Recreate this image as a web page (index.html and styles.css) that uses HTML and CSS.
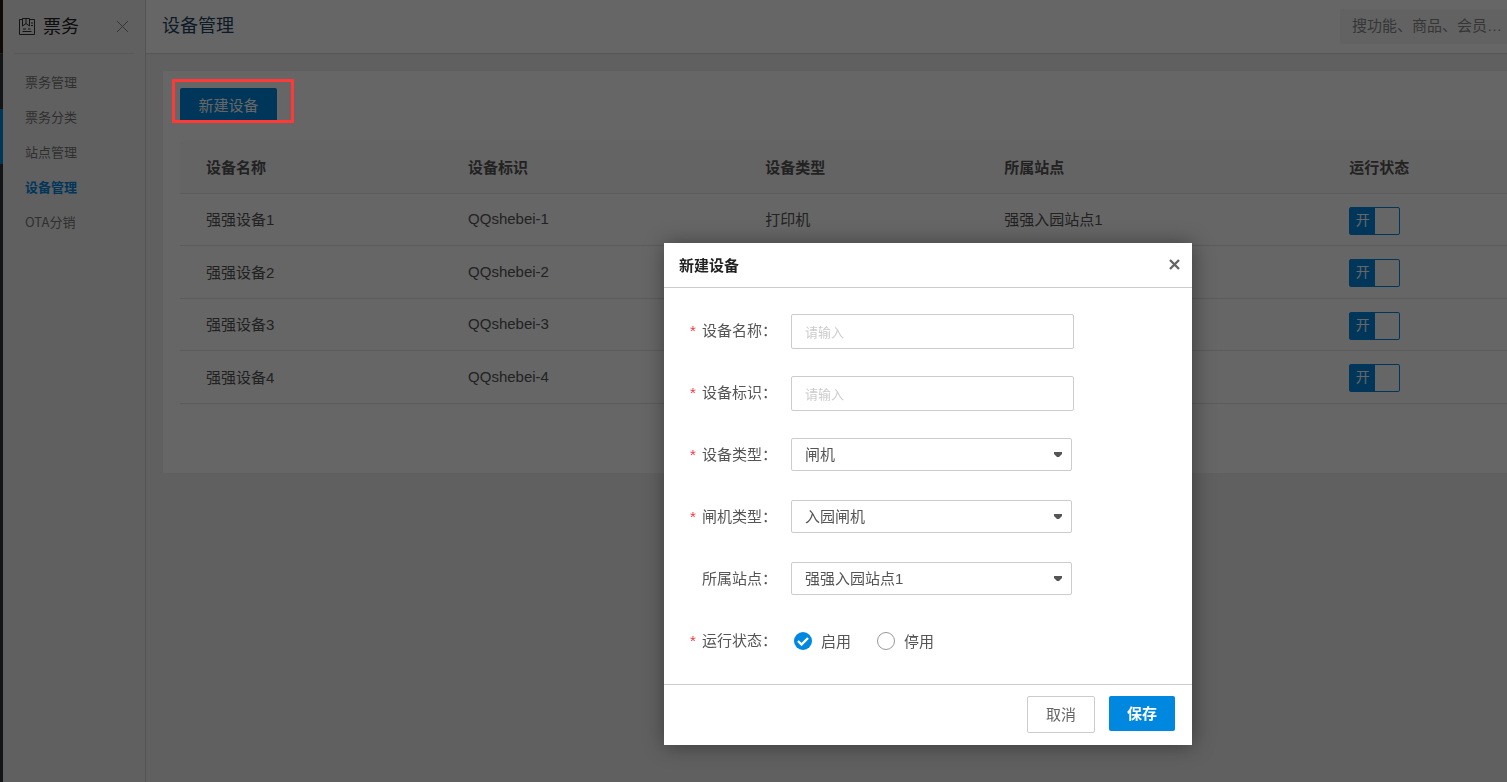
FILE: index.html
```html
<!DOCTYPE html>
<html lang="zh-CN">
  <head>
    <meta charset="UTF-8" />
    <meta name="viewport" content="width=device-width, initial-scale=1.0" />
    <title>设备管理</title>
    <link rel="stylesheet" href="styles.css">
  </head>
  <body>
    <div class="app">
      <!-- Collapsed main menu -->
      <div class="rail">
        <div class="rail-logo"></div>
        <div class="rail-item"></div>
        <div class="rail-item active"></div>
      </div>

      <!-- Sidebar -->
      <aside class="sidebar">
        <div class="sidebar-head">
          <svg class="sidebar-icon" width="16" height="17" viewBox="0 0 16 17" fill="none" stroke="currentColor">
            <path d="M3.5 1.5H0.5V16.5H15.5V1.5H11" />
            <path d="M3.5 0.5H10.5V8L7 5.5L3.5 8Z" />
            <path d="M7 1V5.5M12 5H14M12 7.5H14M4 11H7M9 11H11.5M3.5 13.5H12.5" />
          </svg>
          <span class="sidebar-title">票务</span>
          <button type="button" class="sidebar-close" aria-label="收起">
            <svg width="13" height="13" viewBox="0 0 13 13" stroke="currentColor">
              <path d="M1 1L12 12M12 1L1 12" />
            </svg>
          </button>
        </div>
        <nav class="menu">
          <a href="#">票务管理</a>
          <a href="#">票务分类</a>
          <a href="#">站点管理</a>
          <a href="#" class="active">设备管理</a>
          <a href="#">OTA分销</a>
        </nav>
      </aside>

      <div class="main">
        <header class="topbar">
          <h1>设备管理</h1>
          <input type="text" class="search" aria-label="搜索" placeholder="搜功能、商品、会员…" />
        </header>

        <!-- Device list -->
        <section class="card">
          <div class="toolbar">
            <button type="button" class="btn-new">新建设备</button>
            <span class="highlight"></span>
          </div>
          <table class="devices">
            <colgroup>
              <col class="col-name" />
              <col class="col-code" />
              <col class="col-type" />
              <col class="col-site" />
              <col />
            </colgroup>
            <thead>
              <tr>
                <th>设备名称</th>
                <th>设备标识</th>
                <th>设备类型</th>
                <th>所属站点</th>
                <th>运行状态</th>
              </tr>
            </thead>
            <tbody>
              <tr>
                <td>强强设备1</td>
                <td>QQshebei-1</td>
                <td>打印机</td>
                <td>强强入园站点1</td>
                <td class="status"><button type="button" class="switch" role="switch" aria-checked="true"><span>开</span></button></td>
              </tr>
              <tr>
                <td>强强设备2</td>
                <td>QQshebei-2</td>
                <td></td>
                <td></td>
                <td class="status"><button type="button" class="switch" role="switch" aria-checked="true"><span>开</span></button></td>
              </tr>
              <tr>
                <td>强强设备3</td>
                <td>QQshebei-3</td>
                <td></td>
                <td></td>
                <td class="status"><button type="button" class="switch" role="switch" aria-checked="true"><span>开</span></button></td>
              </tr>
              <tr>
                <td>强强设备4</td>
                <td>QQshebei-4</td>
                <td></td>
                <td></td>
                <td class="status"><button type="button" class="switch" role="switch" aria-checked="true"><span>开</span></button></td>
              </tr>
            </tbody>
          </table>
        </section>
      </div>
    </div>

    <div class="mask"></div>

    <!-- New device dialog -->
    <form class="modal" role="dialog" aria-labelledby="modal-title">
      <div class="modal-head">
        <h2 id="modal-title">新建设备</h2>
        <button type="button" class="modal-close" aria-label="关闭">
          <svg width="11" height="11" viewBox="0 0 11 11" stroke="currentColor" stroke-width="2.4">
            <path d="M1 1L10 10M10 1L1 10" />
          </svg>
        </button>
      </div>
      <div class="modal-body">
        <div class="row">
          <label class="required" for="name">设备名称：</label>
          <input type="text" class="field" id="name" placeholder="请输入" />
        </div>
        <div class="row">
          <label class="required" for="code">设备标识：</label>
          <input type="text" class="field" id="code" placeholder="请输入" />
        </div>
        <div class="row">
          <label class="required" for="type">设备类型：</label>
          <select class="field" id="type">
            <option>闸机</option>
            <option>打印机</option>
          </select>
        </div>
        <div class="row">
          <label class="required" for="gate">闸机类型：</label>
          <select class="field" id="gate">
            <option>入园闸机</option>
          </select>
        </div>
        <div class="row">
          <label for="site">所属站点：</label>
          <select class="field" id="site">
            <option>强强入园站点1</option>
          </select>
        </div>
        <div class="row" role="radiogroup" aria-labelledby="status-label">
          <span class="label required" id="status-label">运行状态：</span>
          <div class="radios">
            <label><input type="radio" name="status" checked />启用</label>
            <label><input type="radio" name="status" />停用</label>
          </div>
        </div>
      </div>
      <div class="modal-foot">
        <button type="button" class="btn-cancel">取消</button>
        <button type="submit" class="btn-save">保存</button>
      </div>
    </form>
  </body>
</html>
```
FILE: styles.css
```css
* {
  box-sizing: border-box;
}
body {
  margin: 0;
  overflow: hidden;
  font-family: "Liberation Sans", "Noto Sans CJK SC", sans-serif;
  font-size: 15px;
  color: #555;
  background-color: #f0f0f0;
}
button,
input,
select {
  font: inherit;
  margin: 0;
}
button {
  padding: 0 0 2px;
  cursor: pointer;
}
.app {
  display: flex;
  min-height: 100vh;
}

/* main menu */
.rail {
  flex: none;
  width: 3px;
  background-color: #2d3238;
}
.rail-logo {
  height: 54px;
  background-color: #221a14;
  border-bottom: 1px solid #484c52;
}
.rail-item {
  height: 55px;
}
.rail-item.active {
  background-color: #0088e0;
}

/* sidebar */
.sidebar {
  flex: none;
  width: 143px;
  background-color: #f1f1f1;
  border-right: 1px solid #d2d2d2;
}
.sidebar-head {
  display: flex;
  align-items: center;
  height: 54px;
  margin: 0 11px;
  padding: 0 5px;
  border-bottom: 1px solid #dcdcdc;
  color: #333;
}
.sidebar-icon {
  margin-right: 8px;
}
.sidebar-title {
  padding-bottom: 3px;
  font-size: 18px;
  color: #222;
}
.sidebar-close {
  display: flex;
  margin-left: auto;
  padding: 0;
  border: 0;
  background: none;
  color: #888;
}
.menu {
  display: flex;
  flex-direction: column;
  padding: 10px 22px;
  font-family: "Noto Sans CJK SC", sans-serif;
}
.menu a {
  font-size: 13px;
  line-height: 35px;
  color: #777;
  text-decoration: none;
}
.menu a.active {
  color: #0088e0;
  font-weight: bold;
}

/* content */
.main {
  flex: 1;
  min-width: 0;
}
.topbar {
  display: flex;
  align-items: center;
  justify-content: space-between;
  height: 54px;
  padding-left: 16px;
  background-color: #fff;
  border-bottom: 1px solid #d5d5d5;
}
.topbar h1 {
  margin: 0;
  padding-bottom: 5px;
  font-size: 18px;
  font-weight: normal;
  color: #23435c;
}
.search {
  width: 167px;
  height: 35px;
  padding: 0 0 2px 12px;
  border: 0;
  border-radius: 2px 0 0 2px;
  background-color: #f5f5f5;
}
.search::placeholder {
  color: #888;
}
.card {
  margin: 17px 0 0 17px;
  padding: 17px 0 69px 17px;
  background-color: #fff;
}
.toolbar {
  position: relative;
  margin-bottom: 19px;
}
.btn-new {
  display: block;
  width: 97px;
  height: 34px;
  border: 0;
  border-radius: 2px;
  background-color: #0088e0;
  color: #fff;
}
.highlight {
  position: absolute;
  z-index: 2;
  top: -9px;
  left: -8px;
  width: 122px;
  height: 44px;
  border: 3px solid #ff3a36;
}
.devices {
  width: 100%;
  table-layout: fixed;
  border-collapse: separate;
  border-spacing: 0;
  color: #555;
}
.col-name {
  width: 19.75%;
}
.col-code {
  width: 22.4%;
}
.col-type {
  width: 18%;
}
.col-site {
  width: 26%;
}
.devices th,
.devices td {
  height: 52px;
  padding: 0 0 2px 26px;
  border-bottom: 1px solid #e3e3e3;
  text-align: left;
}
.devices th,
.devices tr:nth-child(even) td {
  height: 53px;
}
.devices th {
  background-color: #fafafa;
}
.devices .status {
  padding: 2px 0 0 26px;
}
.switch {
  display: flex;
  width: 51px;
  height: 28px;
  padding: 0;
  border: 1px solid #0088e0;
  border-radius: 2px;
  background-color: #fff;
}
.switch span {
  width: 25px;
  height: 26px;
  line-height: 24px;
  font-size: 14px;
  background-color: #0088e0;
  color: #fff;
}

/* dialog */
.mask {
  position: fixed;
  z-index: 1;
  inset: 0;
  background-color: rgba(0, 0, 0, 0.6);
}
.modal {
  position: absolute;
  z-index: 3;
  top: 243px;
  left: 664px;
  width: 528px;
  background-color: #fff;
  box-shadow: 1px 1px 20px rgba(0, 0, 0, 0.4);
}
.modal-head {
  display: flex;
  align-items: center;
  justify-content: space-between;
  height: 45px;
  padding: 0 12px 2px 15px;
  border-bottom: 1px solid #ccc;
}
.modal-head h2 {
  margin: 0;
  font-size: 15px;
  color: #222;
}
.modal-close {
  display: flex;
  padding: 0;
  border: 0;
  background: none;
  color: #666;
}
.modal-body {
  display: grid;
  row-gap: 27px;
  padding: 26px 26px 25px;
}
.row {
  display: flex;
  min-height: 35px;
}
.row > label,
.label {
  width: 101px;
  padding-left: 12px;
  line-height: 34px;
}
.required::before {
  content: "*";
  float: left;
  margin-left: -12px;
  color: #f0353b;
}
.field {
  width: 283px;
  height: 35px;
  padding: 0 13px;
  border: 1px solid #ccc;
  border-radius: 2px;
  background-color: #fff;
  color: #555;
}
.field::placeholder {
  font-size: 13px;
  color: #ccc;
}
select.field {
  width: 281px;
  height: 33px;
  appearance: none;
  background: #fff url("data:image/svg+xml,%3Csvg xmlns='http://www.w3.org/2000/svg' width='8' height='6'%3E%3Cpath d='M0 0h8v2L5 5H3L0 2z' fill='%23555'/%3E%3C/svg%3E") no-repeat right 9px center;
}
.radios {
  display: flex;
  align-items: center;
  gap: 26px;
  padding: 0 0 2px 3px;
}
.radios label {
  display: flex;
  align-items: center;
  gap: 9px;
}
.radios input {
  appearance: none;
  width: 18px;
  height: 18px;
  border: 1px solid #999;
  border-radius: 50%;
}
.radios input:checked {
  border: 0;
  background: #0088e0 url("data:image/svg+xml,%3Csvg xmlns='http://www.w3.org/2000/svg' width='18' height='18'%3E%3Cpath d='M4 9l3.5 3.5L14 6' fill='none' stroke='%23fff' stroke-width='2.4'/%3E%3C/svg%3E") center no-repeat;
}
.modal-foot {
  display: flex;
  align-items: flex-start;
  justify-content: flex-end;
  gap: 14px;
  padding: 11px 17px 12px;
  border-top: 1px solid #ccc;
}
.btn-cancel {
  width: 68px;
  height: 37px;
  border: 1px solid #ccc;
  border-radius: 2px;
  background-color: #fff;
  color: #666;
}
.btn-save {
  width: 66px;
  height: 35px;
  border: 0;
  border-radius: 2px;
  background-color: #0088e0;
  color: #fff;
  font-weight: bold;
}
```
